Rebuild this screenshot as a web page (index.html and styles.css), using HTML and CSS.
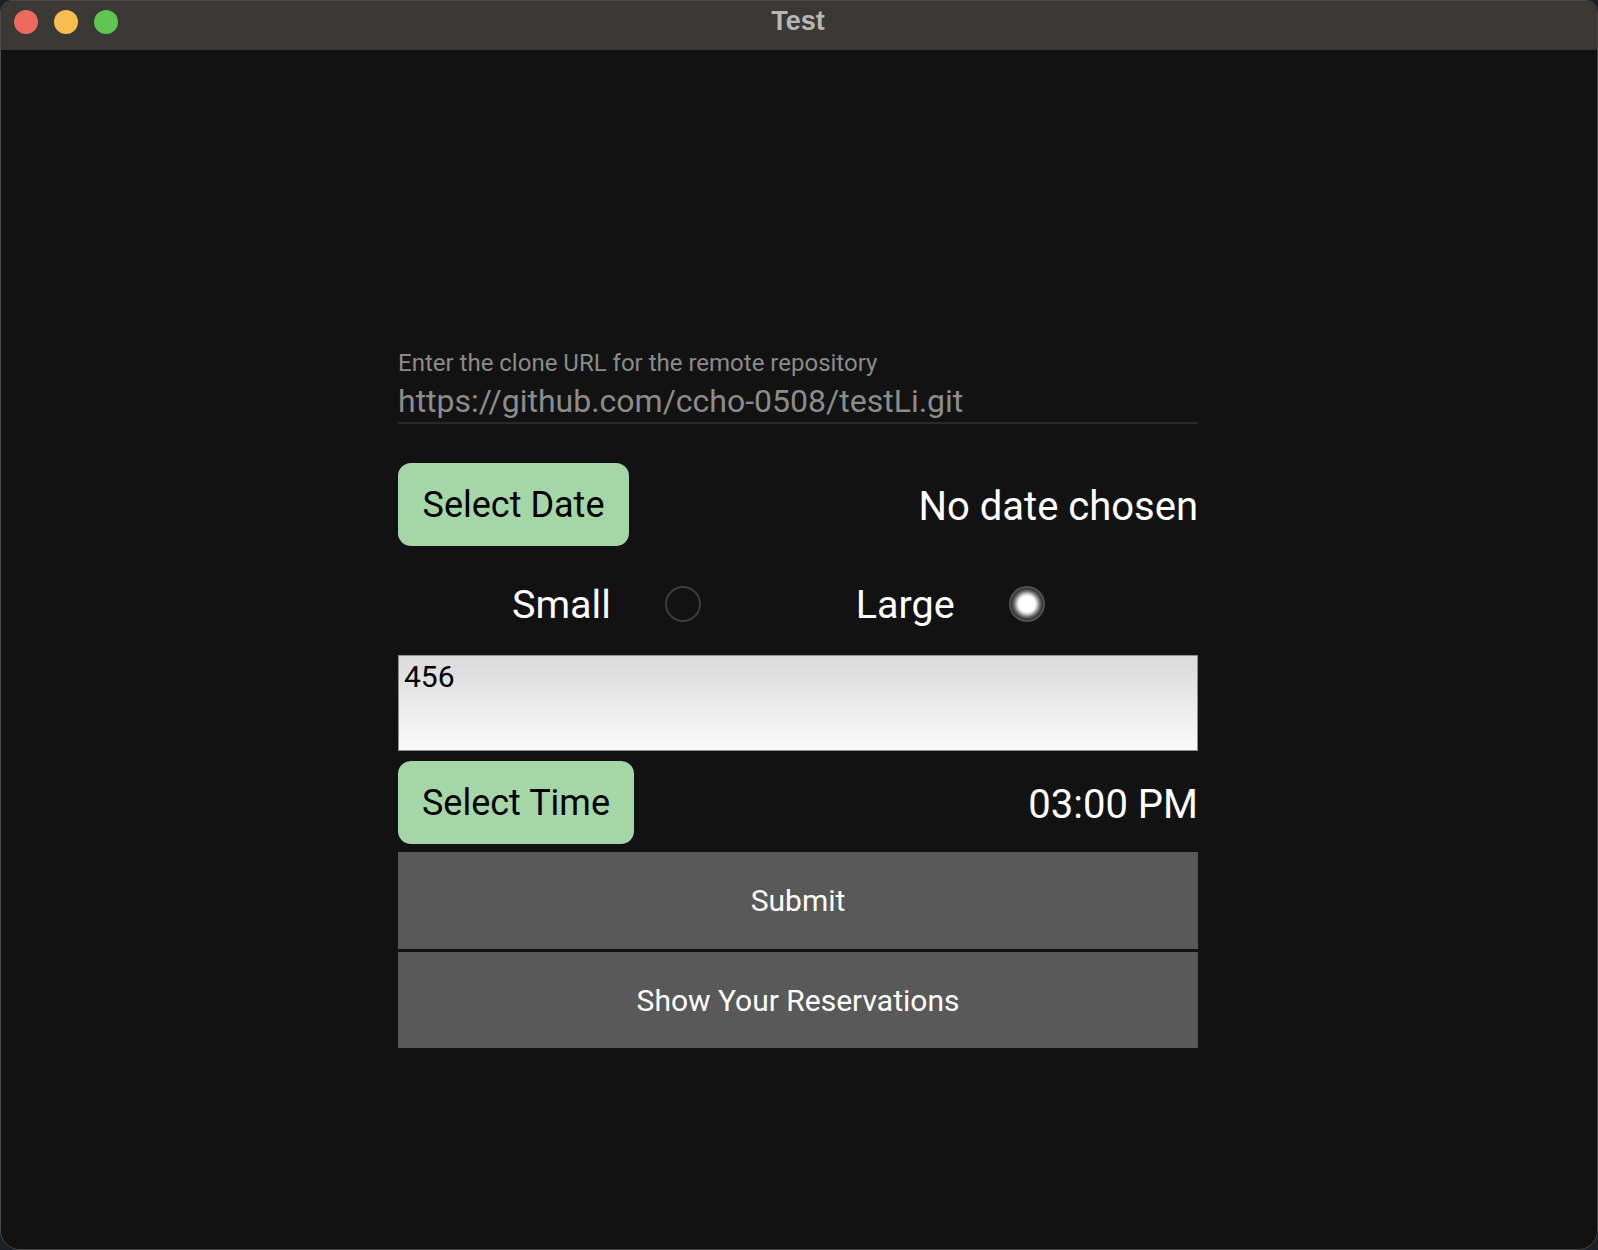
FILE: index.html
```html
<!DOCTYPE html>
<html>
<head>
<meta charset="utf-8">
<title>Test</title>
<link rel="stylesheet" href="styles.css">
</head>
<body>
<div class="window">
  <div class="titlebar">
    <div class="lights">
      <span class="light red"></span>
      <span class="light yellow"></span>
      <span class="light green"></span>
    </div>
    <div class="title">Test</div>
  </div>
  <div class="content">
    <div class="form">
      <div class="field">
        <div class="field-label">Enter the clone URL for the remote repository</div>
        <div class="field-value">https://github.com/ccho-0508/testLi.git</div>
      </div>
      <div class="row row-date">
        <button class="pill pill-date">Select Date</button>
        <span class="big-text">No date chosen</span>
      </div>
      <div class="radio-row">
        <span class="radio-label label-small">Small</span>
        <span class="radio"></span>
        <span class="radio-label label-large">Large</span>
        <span class="radio radio-on"></span>
      </div>
      <div class="textbox">456</div>
      <div class="row row-time">
        <button class="pill pill-time">Select Time</button>
        <span class="big-text">03:00 PM</span>
      </div>
      <button class="flat flat-submit">Submit</button>
      <button class="flat flat-res">Show Your Reservations</button>
    </div>
  </div>
</div>
</body>
</html>
```
FILE: styles.css
```css
* { box-sizing: border-box; }
html, body {
  margin: 0;
  padding: 0;
  width: 1598px;
  height: 1250px;
  background: #1b1f27;
  overflow: hidden;
}
.window {
  width: 1598px;
  height: 1250px;
  background: #121212;
  border: 1px solid #4a4a4a;
  border-radius: 12px 12px 20px 20px;
  overflow: hidden;
  display: flex;
  flex-direction: column;
  font-family: Roboto, "Noto Sans", sans-serif;
}
.titlebar {
  height: 50px;
  flex: none;
  background: #3a3935;
  border-bottom: 1px solid #0c0c0c;
  display: flex;
  align-items: center;
  justify-content: center;
  position: relative;
}
.lights {
  position: absolute;
  left: 13px;
  top: 9px;
  display: flex;
  gap: 16px;
}
.light {
  width: 24px;
  height: 24px;
  border-radius: 50%;
  display: block;
}
.red { background: #ee6a5f; }
.yellow { background: #f5be4f; }
.green { background: #5ec553; }
.title {
  font-family: "Liberation Sans", Arial, sans-serif;
  font-weight: bold;
  font-size: 27px;
  color: #b8b8b3;
  margin-top: -8px;
  margin-left: -2px;
}
.content {
  flex: 1;
  background: #121212;
  padding-right: 2px;
}
.form {
  width: 800px;
  margin: 0 auto;
  padding-top: 299px;
  display: flex;
  flex-direction: column;
}
.field {
  border-bottom: 2px solid #2a2a2a;
  padding-bottom: 3px;
}
.field-label {
  font-size: 24px;
  line-height: 27px;
  color: #8a8a8a;
}
.field-value {
  margin-top: 7px;
  font-size: 32px;
  line-height: 35px;
  color: #8c8c8c;
}
.row {
  display: flex;
  justify-content: space-between;
  align-items: center;
}
.row-date { margin-top: 39px; }
.row-time { margin-top: 10px; }
.pill {
  height: 83px;
  border: none;
  border-radius: 13px;
  background: #a5d6a7;
  color: #000;
  font-family: Roboto, sans-serif;
  font-size: 36px;
  padding: 0;
}
.pill-date { width: 231px; }
.pill-time { width: 236px; }
.big-text {
  font-size: 40px;
  color: #ffffff;
  padding-top: 3px;
}
.radio-row {
  margin-top: 38px;
  margin-bottom: 31px;
  height: 40px;
  display: flex;
  align-items: center;
  padding-left: 114px;
}
.radio-label {
  font-size: 39.5px;
  color: #ffffff;
}
.radio {
  width: 36px;
  height: 36px;
  border-radius: 50%;
  border: 2px solid #3c3c3c;
  display: block;
  flex: none;
}
.label-small + .radio { margin-left: 54px; }
.label-large { margin-left: 155px; }
.label-large + .radio { margin-left: 54px; }
.radio-on {
  border-color: #505050;
  background: radial-gradient(circle, #ffffff 0, #ffffff 8px, #d0d0d0 10px, #6a6a6a 13px, #2c2c2c 16px);
}
.textbox {
  height: 96px;
  border: 1px solid #8e8e8e;
  background: linear-gradient(#dadada, #fafafa);
  color: #000;
  font-size: 30px;
  line-height: 36px;
  padding: 3px 5px;
}
.flat {
  width: 100%;
  border: none;
  background: #595959;
  color: #ffffff;
  font-family: Roboto, sans-serif;
  font-size: 30px;
  padding: 0;
}
.flat-submit {
  margin-top: 8px;
  height: 97px;
}
.flat-res {
  margin-top: 3px;
  height: 96px;
}
```
